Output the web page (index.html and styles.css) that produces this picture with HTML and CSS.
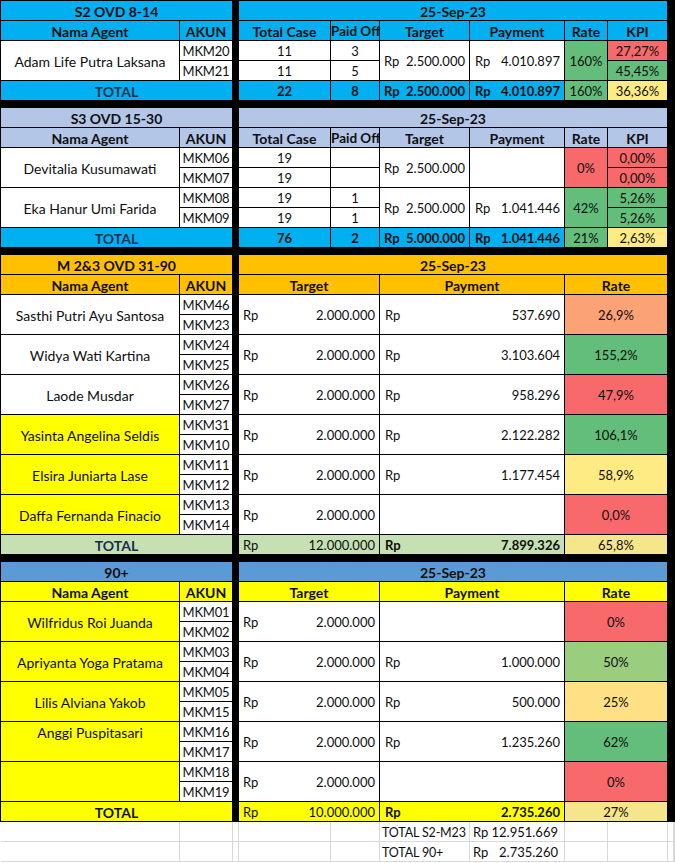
FILE: index.html
```html
<!DOCTYPE html>
<html>
<head>
<meta charset="utf-8">
<title>Rekap OVD</title>
<link rel="stylesheet" href="styles.css">
</head>
<body>
<div class="sheet">

  <!-- S2 OVD 8-14 -->
  <div class="sec rows5">
    <div class="sep"></div>
    <div class="c cs2 hd sky">S2 OVD 8-14</div>
    <div class="c cs6 hd sky">25-Sep-23</div>

    <div class="c hd sky">Nama Agent</div>
    <div class="c hd sky">AKUN</div>
    <div class="c hd sky">Total Case</div>
    <div class="c hd sky clip">Paid Off</div>
    <div class="c hd sky">Target</div>
    <div class="c hd sky">Payment</div>
    <div class="c hd sky">Rate</div>
    <div class="c hd sky">KPI</div>

    <div class="c rs2 nm">Adam Life Putra Laksana</div>
    <div class="c akun">MKM20</div>
    <div class="c">11</div>
    <div class="c">3</div>
    <div class="c rs2 money mt"><span>Rp</span><span>2.500.000</span></div>
    <div class="c rs2 money mp"><span>Rp</span><span>4.010.897</span></div>
    <div class="c rs2 green">160%</div>
    <div class="c red">27,27%</div>
    <div class="c akun">MKM21</div>
    <div class="c">11</div>
    <div class="c">5</div>
    <div class="c green">45,45%</div>

    <div class="c cs2 hd sky tot">TOTAL</div>
    <div class="c b sky">22</div>
    <div class="c b sky">8</div>
    <div class="c b sky money mt"><span>Rp</span><span>2.500.000</span></div>
    <div class="c b sky money mp"><span>Rp</span><span>4.010.897</span></div>
    <div class="c green">160%</div>
    <div class="c yellow">36,36%</div>
  </div>

  <!-- S3 OVD 15-30 -->
  <div class="sec rows7">
    <div class="sep"></div>
    <div class="c cs2 hd lav">S3 OVD 15-30</div>
    <div class="c cs6 hd lav">25-Sep-23</div>

    <div class="c hd lav">Nama Agent</div>
    <div class="c hd lav">AKUN</div>
    <div class="c hd lav">Total Case</div>
    <div class="c hd lav clip">Paid Off</div>
    <div class="c hd lav">Target</div>
    <div class="c hd lav">Payment</div>
    <div class="c hd lav">Rate</div>
    <div class="c hd lav">KPI</div>

    <div class="c rs2 nm">Devitalia Kusumawati</div>
    <div class="c akun">MKM06</div>
    <div class="c">19</div>
    <div class="c"></div>
    <div class="c rs2 money mt"><span>Rp</span><span>2.500.000</span></div>
    <div class="c rs2"></div>
    <div class="c rs2 red">0%</div>
    <div class="c red">0,00%</div>
    <div class="c akun">MKM07</div>
    <div class="c">19</div>
    <div class="c"></div>
    <div class="c red">0,00%</div>

    <div class="c rs2 nm">Eka Hanur Umi Farida</div>
    <div class="c akun">MKM08</div>
    <div class="c">19</div>
    <div class="c">1</div>
    <div class="c rs2 money mt"><span>Rp</span><span>2.500.000</span></div>
    <div class="c rs2 money mp"><span>Rp</span><span>1.041.446</span></div>
    <div class="c rs2 green">42%</div>
    <div class="c green">5,26%</div>
    <div class="c akun">MKM09</div>
    <div class="c">19</div>
    <div class="c">1</div>
    <div class="c green">5,26%</div>

    <div class="c cs2 hd sky tot">TOTAL</div>
    <div class="c b sky">76</div>
    <div class="c b sky">2</div>
    <div class="c b sky money mt"><span>Rp</span><span>5.000.000</span></div>
    <div class="c b sky money mp"><span>Rp</span><span>1.041.446</span></div>
    <div class="c green">21%</div>
    <div class="c yellow">2,63%</div>
  </div>

  <!-- M 2&3 OVD 31-90 -->
  <div class="sec rows15">
    <div class="sep"></div>
    <div class="c cs2 hd gold">M 2&amp;3 OVD 31-90</div>
    <div class="c cs6 hd gold">25-Sep-23</div>

    <div class="c hd gold">Nama Agent</div>
    <div class="c hd gold">AKUN</div>
    <div class="c cs2 hd gold">Target</div>
    <div class="c cs2 hd gold">Payment</div>
    <div class="c cs2 hd gold">Rate</div>

    <div class="c rs2 nm">Sasthi Putri Ayu Santosa</div>
    <div class="c akun">MKM46</div>
    <div class="c cs2 rs2 money mt"><span>Rp</span><span>2.000.000</span></div>
    <div class="c cs2 rs2 money mp"><span>Rp</span><span>537.690</span></div>
    <div class="c cs2 rs2 orange">26,9%</div>
    <div class="c akun">MKM23</div>

    <div class="c rs2 nm">Widya Wati Kartina</div>
    <div class="c akun">MKM24</div>
    <div class="c cs2 rs2 money mt"><span>Rp</span><span>2.000.000</span></div>
    <div class="c cs2 rs2 money mp"><span>Rp</span><span>3.103.604</span></div>
    <div class="c cs2 rs2 green">155,2%</div>
    <div class="c akun">MKM25</div>

    <div class="c rs2 nm">Laode Musdar</div>
    <div class="c akun">MKM26</div>
    <div class="c cs2 rs2 money mt"><span>Rp</span><span>2.000.000</span></div>
    <div class="c cs2 rs2 money mp"><span>Rp</span><span>958.296</span></div>
    <div class="c cs2 rs2 red">47,9%</div>
    <div class="c akun">MKM27</div>

    <div class="c rs2 nm ylw">Yasinta Angelina Seldis</div>
    <div class="c akun">MKM31</div>
    <div class="c cs2 rs2 money mt"><span>Rp</span><span>2.000.000</span></div>
    <div class="c cs2 rs2 money mp"><span>Rp</span><span>2.122.282</span></div>
    <div class="c cs2 rs2 green">106,1%</div>
    <div class="c akun">MKM10</div>

    <div class="c rs2 nm ylw">Elsira Juniarta Lase</div>
    <div class="c akun">MKM11</div>
    <div class="c cs2 rs2 money mt"><span>Rp</span><span>2.000.000</span></div>
    <div class="c cs2 rs2 money mp"><span>Rp</span><span>1.177.454</span></div>
    <div class="c cs2 rs2 yellow">58,9%</div>
    <div class="c akun">MKM12</div>

    <div class="c rs2 nm ylw">Daffa Fernanda Finacio</div>
    <div class="c akun">MKM13</div>
    <div class="c cs2 rs2 money mt"><span>Rp</span><span>2.000.000</span></div>
    <div class="c cs2 rs2"></div>
    <div class="c cs2 rs2 red">0,0%</div>
    <div class="c akun">MKM14</div>

    <div class="c cs2 hd mint tot">TOTAL</div>
    <div class="c cs2 mint money mt"><span>Rp</span><span>12.000.000</span></div>
    <div class="c cs2 b mint money mp"><span>Rp</span><span>7.899.326</span></div>
    <div class="c cs2 sand">65,8%</div>
  </div>

  <!-- 90+ -->
  <div class="sec rows13">
    <div class="sep"></div>
    <div class="c cs2 hd steel">90+</div>
    <div class="c cs6 hd steel">25-Sep-23</div>

    <div class="c hd ylw">Nama Agent</div>
    <div class="c hd ylw">AKUN</div>
    <div class="c cs2 hd ylw">Target</div>
    <div class="c cs2 hd ylw">Payment</div>
    <div class="c cs2 hd ylw">Rate</div>

    <div class="c rs2 nm ylw">Wilfridus Roi Juanda</div>
    <div class="c akun">MKM01</div>
    <div class="c cs2 rs2 money mt"><span>Rp</span><span>2.000.000</span></div>
    <div class="c cs2 rs2"></div>
    <div class="c cs2 rs2 red">0%</div>
    <div class="c akun">MKM02</div>

    <div class="c rs2 nm ylw">Apriyanta Yoga Pratama</div>
    <div class="c akun">MKM03</div>
    <div class="c cs2 rs2 money mt"><span>Rp</span><span>2.000.000</span></div>
    <div class="c cs2 rs2 money mp"><span>Rp</span><span>1.000.000</span></div>
    <div class="c cs2 rs2 lgreen">50%</div>
    <div class="c akun">MKM04</div>

    <div class="c rs2 nm ylw">Lilis Alviana Yakob</div>
    <div class="c akun">MKM05</div>
    <div class="c cs2 rs2 money mt"><span>Rp</span><span>2.000.000</span></div>
    <div class="c cs2 rs2 money mp"><span>Rp</span><span>500.000</span></div>
    <div class="c cs2 rs2 peach">25%</div>
    <div class="c akun">MKM15</div>

    <div class="c rs2 nm ylw top">Anggi Puspitasari</div>
    <div class="c akun">MKM16</div>
    <div class="c cs2 rs2 money mt"><span>Rp</span><span>2.000.000</span></div>
    <div class="c cs2 rs2 money mp"><span>Rp</span><span>1.235.260</span></div>
    <div class="c cs2 rs2 green">62%</div>
    <div class="c akun">MKM17</div>

    <div class="c rs2 ylw"></div>
    <div class="c akun">MKM18</div>
    <div class="c cs2 rs2 money mt"><span>Rp</span><span>2.000.000</span></div>
    <div class="c cs2 rs2"></div>
    <div class="c cs2 rs2 red">0%</div>
    <div class="c akun">MKM19</div>

    <div class="c cs2 hd ylw">TOTAL</div>
    <div class="c cs2 ylw money mt"><span>Rp</span><span>10.000.000</span></div>
    <div class="c cs2 b ylw money mp"><span>Rp</span><span>2.735.260</span></div>
    <div class="c cs2 sand">27%</div>
  </div>
</div>

<div class="extra">
  <div class="g"></div><div class="g"></div><div class="g"></div><div class="g"></div><div class="g"></div>
  <div class="g lbl">TOTAL S2-M23</div>
  <div class="g gmoney"><span>Rp</span><span>12.951.669</span></div>
  <div class="g"></div><div class="g"></div><div class="g"></div><div class="g"></div>

  <div class="g"></div><div class="g"></div><div class="g"></div><div class="g"></div><div class="g"></div>
  <div class="g lbl">TOTAL 90+</div>
  <div class="g gmoney"><span>Rp</span><span>2.735.260</span></div>
  <div class="g"></div><div class="g"></div><div class="g"></div><div class="g"></div>
</div>
</body>
</html>
```

FILE: styles.css
```css
html, body {
  margin: 0;
  padding: 0;
  background: #ffffff;
}

body {
  font-family: Lato, "Liberation Sans", sans-serif;
  font-size: 13px;
  color: #0f0f0f;
}

.sheet {
  width: 675px;
  box-sizing: border-box;
  background: #000000;
  padding: 1px 0 0 1px;
  display: flex;
  flex-direction: column;
  gap: 7px;
}

.sec {
  display: grid;
  grid-template-columns: 179px 53px 6px 92px 49px 90px 95px 43px 60px;
  grid-auto-rows: 20px;
  width: 667px;
}

.rows5 { grid-template-rows: repeat(5, 20px); }
.rows7 { grid-template-rows: repeat(7, 20px); }
.rows13 { grid-template-rows: repeat(13, 20px); }
.rows15 { grid-template-rows: repeat(15, 20px); }

.sep {
  grid-column: 3;
  grid-row: 1 / -1;
  background: #000000;
}

.c {
  box-sizing: border-box;
  border-right: 1px solid #000000;
  border-bottom: 1px solid #000000;
  background: #ffffff;
  display: flex;
  align-items: center;
  justify-content: center;
  white-space: nowrap;
  overflow: hidden;
  padding-top: 1px;
  font-size: 13px;
}

.nm { font-size: 14px; }
.hd { font-size: 14px; font-weight: 700; }
.b { font-weight: 700; }
.akun { letter-spacing: -0.2px; }

.cs2 { grid-column: span 2; }
.cs6 { grid-column: span 6; }
.rs2 { grid-row: span 2; }

.clip { justify-content: flex-start; font-size: 13.5px; }
.top { align-items: flex-start; padding-top: 2px; }
.tot { color: #17304a; }

.money { justify-content: space-between; }
.mt { padding-left: 4px; padding-right: 4px; }
.mp { padding-left: 5px; padding-right: 4px; }

/* fills */
.sky { background: #00b0f0; }
.lav { background: #b4c6e7; }
.gold { background: #ffc000; }
.steel { background: #5b9bd5; }
.mint { background: #c6e0b4; }
.ylw { background: #ffff00; }
.red { background: #f8696b; }
.green { background: #63be7b; }
.lgreen { background: #9bcd7e; }
.yellow { background: #ffeb84; }
.peach { background: #ffe084; }
.orange { background: #fba276; }
.sand { background: #f6e68b; }

/* spare grid rows below */
.extra {
  display: grid;
  grid-template-columns: 179px 53px 6px 92px 49px 90px 95px 43px 60px 6px 1fr;
  grid-auto-rows: 20px;
  padding-left: 1px;
  width: 675px;
  box-sizing: border-box;
}

.g {
  box-sizing: border-box;
  border-right: 1px solid #d9d9d9;
  border-bottom: 1px solid #d9d9d9;
  display: flex;
  align-items: center;
  white-space: nowrap;
  overflow: hidden;
  padding-top: 1px;
  font-size: 13px;
}

.lbl { padding-left: 2px; font-size: 12.5px; letter-spacing: -0.15px; }
.gmoney { justify-content: space-between; padding: 1px 6px 0 3px; }
```
